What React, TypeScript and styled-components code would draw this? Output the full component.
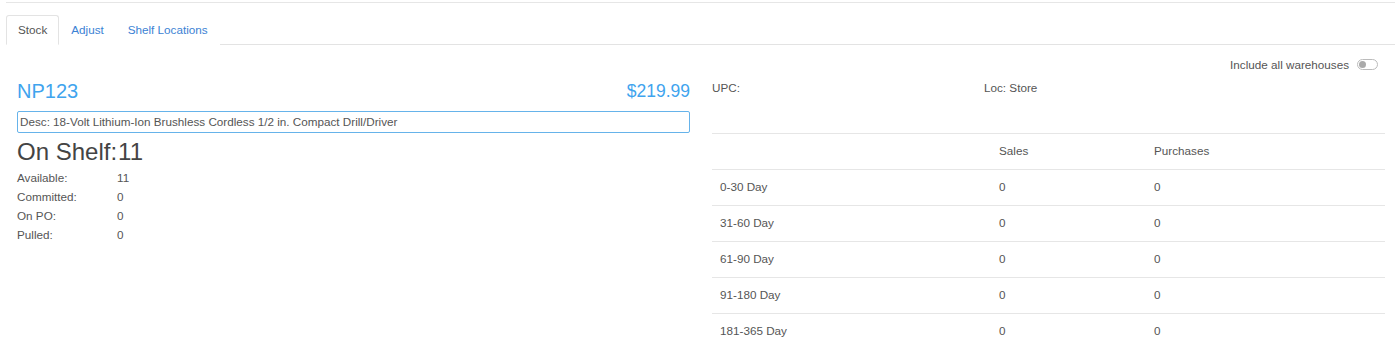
import React from "react";
import styled, { createGlobalStyle } from "styled-components";

const Global = createGlobalStyle`
  html, body { margin: 0; padding: 0; background: #fff; }
  body { font-family: "Liberation Sans", Arial, sans-serif; font-size: 11.7px; color: #555; }
  * { box-sizing: border-box; }
`;

const Page = styled.div`
  padding: 2px 5px 0 6px;
`;

const TopRule = styled.div`
  border-top: 1px solid #e6e6e6;
`;

const TabList = styled.ul`
  list-style: none;
  margin: 12px 0 0;
  padding: 0;
  display: flex;
  border-bottom: 1px solid #e3e3e3;
`;

const Tab = styled.li<{ $active?: boolean }>`
  margin-bottom: -1px;
  padding: 0 11px;
  height: 30px;
  line-height: 27px;
  font-size: 11.7px;
  border: 1px solid ${(p) => (p.$active ? "#e3e3e3" : "transparent")};
  border-bottom-color: ${(p) => (p.$active ? "#fff" : "transparent")};
  border-radius: 3px 3px 0 0;
  background: #fff;
  color: ${(p) => (p.$active ? "#555" : "#3b82d4")};
  cursor: pointer;
`;

const TopBar = styled.div`
  display: flex;
  justify-content: flex-end;
  align-items: center;
  gap: 8px;
  padding: 12px 17px 0 0;
  height: 27px;
`;

const ToggleLabel = styled.span`
  font-size: 11.7px;
  color: #555;
`;

const Toggle = styled.span`
  position: relative;
  display: inline-block;
  width: 21px;
  height: 11px;
  border: 1px solid #bbb;
  border-radius: 6px;
  background: #fff;
  &::after {
    content: "";
    position: absolute;
    left: 1px;
    top: 1px;
    width: 7px;
    height: 7px;
    border-radius: 50%;
    background: #aaa;
  }
`;

const Columns = styled.div`
  display: grid;
  grid-template-columns: 673px 673px;
  gap: 22px;
  padding-left: 11px;
`;

const Col = styled.div`
  display: flex;
  flex-direction: column;
`;

const HeadRow = styled.div`
  display: flex;
  justify-content: space-between;
  align-items: center;
  height: 24px;
  margin-top: 7px;
`;

const Sku = styled.span`
  font-size: 20px;
  color: #3fa4ee;
`;

const Price = styled.span`
  font-size: 17.5px;
  color: #3fa4ee;
`;

const DescInput = styled.div`
  margin-top: 8px;
  height: 22px;
  border: 1px solid #66b3ea;
  border-radius: 2px;
  padding: 0 2px;
  line-height: 20px;
  font-size: 11.7px;
  color: #555;
`;

const OnShelf = styled.div`
  font-size: 24px;
  line-height: 28px;
  margin-top: 5px;
  color: #444;
  display: flex;
  gap: 1px;
`;

const StatRow = styled.div`
  display: grid;
  grid-template-columns: 100px 1fr;
  height: 19px;
  line-height: 19px;
  font-size: 11.7px;
`;

const Stats = styled.div`
  margin-top: 2px;
`;

const InfoRow = styled.div`
  display: grid;
  grid-template-columns: 272px 1fr;
  margin-top: 8px;
  height: 16px;
  line-height: 16px;
  font-size: 11.7px;
`;

const Table = styled.div`
  margin-top: 37px;
`;

const TRow = styled.div`
  display: grid;
  grid-template-columns: 279px 155px 1fr;
  height: 36px;
  align-items: center;
  padding-bottom: 2px;
  border-top: 1px solid #e6e6e6;
  font-size: 11.7px;
`;

const Cell = styled.div`
  padding-left: 8px;
`;

const stats = [
  ["Available:", "11"],
  ["Committed:", "0"],
  ["On PO:", "0"],
  ["Pulled:", "0"],
];

const periods = ["0-30 Day", "31-60 Day", "61-90 Day", "91-180 Day", "181-365 Day"];

export default function App() {
  return (
    <Page>
      <Global />
      <TopRule />
      <TabList>
        <Tab $active>Stock</Tab>
        <Tab>Adjust</Tab>
        <Tab>Shelf Locations</Tab>
      </TabList>
      <TopBar>
        <ToggleLabel>Include all warehouses</ToggleLabel>
        <Toggle />
      </TopBar>
      <Columns>
        <Col>
          <HeadRow>
            <Sku>NP123</Sku>
            <Price>$219.99</Price>
          </HeadRow>
          <DescInput>Desc: 18-Volt Lithium-Ion Brushless Cordless 1/2 in. Compact Drill/Driver</DescInput>
          <OnShelf>
            <span>On Shelf:</span>
            <span>11</span>
          </OnShelf>
          <Stats>
            {stats.map(([k, v]) => (
              <StatRow key={k}>
                <span>{k}</span>
                <span>{v}</span>
              </StatRow>
            ))}
          </Stats>
        </Col>
        <Col>
          <InfoRow>
            <span>UPC:</span>
            <span>Loc: Store</span>
          </InfoRow>
          <Table>
            <TRow>
              <Cell />
              <Cell>Sales</Cell>
              <Cell>Purchases</Cell>
            </TRow>
            {periods.map((p) => (
              <TRow key={p}>
                <Cell>{p}</Cell>
                <Cell>0</Cell>
                <Cell>0</Cell>
              </TRow>
            ))}
          </Table>
        </Col>
      </Columns>
    </Page>
  );
}
